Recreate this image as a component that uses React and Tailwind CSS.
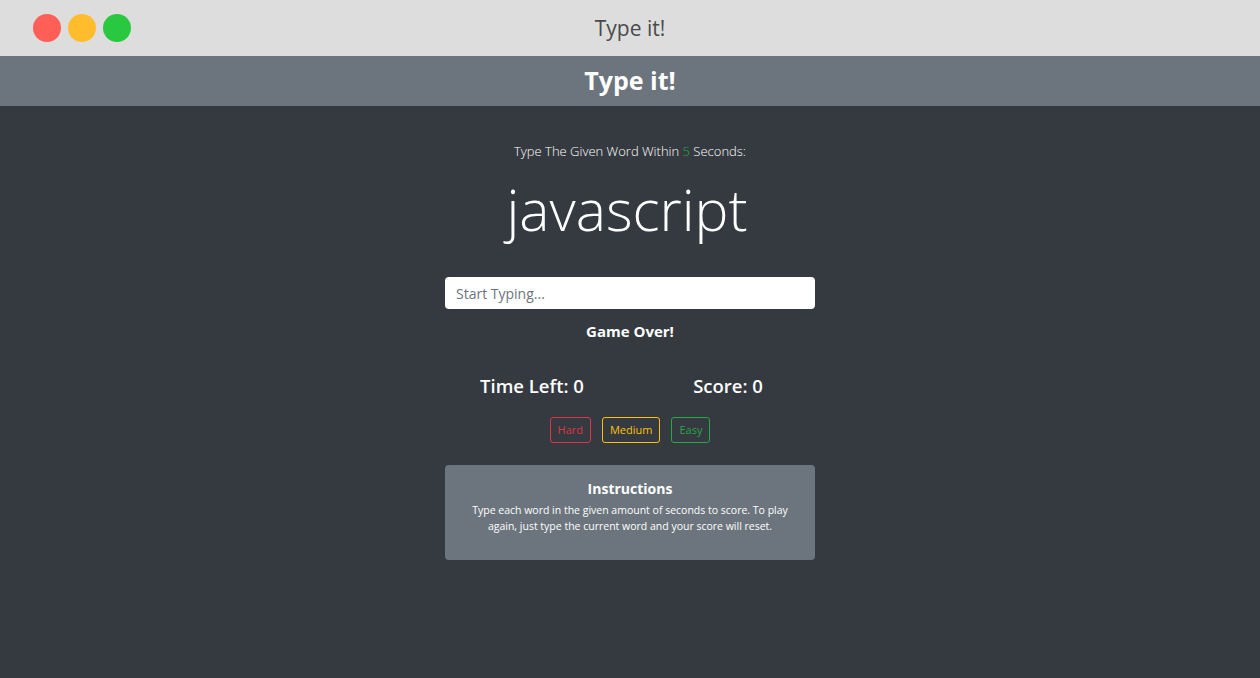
export default function App() {
  const font = { fontFamily: '"Open Sans", "Noto Sans", sans-serif' };
  return (
    <div className="w-[1260px] h-[678px] flex flex-col bg-[#343a40] overflow-hidden" style={font}>
      <div className="h-[56px] bg-[#dddddd] flex items-center relative shrink-0">
        <div className="flex gap-[7px] pl-[33px]">
          <span className="w-[28px] h-[28px] rounded-full bg-[#ff5f57]" />
          <span className="w-[28px] h-[28px] rounded-full bg-[#ffbd2e]" />
          <span className="w-[28px] h-[28px] rounded-full bg-[#28c940]" />
        </div>
        <div className="absolute inset-0 flex items-center justify-center pt-[2px] text-[21px] text-[#4a4a4a]">Type it!</div>
      </div>
      <div className="h-[50px] bg-[#6c757d] flex items-center justify-center shrink-0">
        <h1 className="text-[25px] font-bold text-white">Type it!</h1>
      </div>
      <div className="flex flex-col items-center text-white">
        <p className="mt-[35px] text-[13px] font-light leading-[20px]">
          Type The Given Word Within <span className="text-[#28a745]">5</span> Seconds:
        </p>
        <h2 className="mt-[12px] text-[57px] font-light leading-[72px] -translate-x-[3px]">javascript</h2>
        <input
          className="mt-[32px] w-[370px] h-[32px] rounded-[4px] bg-white px-[11px] text-[14px] text-[#495057] placeholder:text-[#6c757d] outline-none"
          placeholder="Start Typing..."
          readOnly
        />
        <p className="mt-[11px] text-[15px] font-bold leading-[22px]">Game Over!</p>
        <div className="mt-[31px] grid grid-cols-[196px_196px] text-[18.5px] font-semibold leading-[26px]">
          <div className="text-center">Time Left: 0</div>
          <div className="text-center">Score: 0</div>
        </div>
        <div className="mt-[18px] flex gap-[11px] text-[11px] leading-[16px]">
          <button className="h-[26px] px-[7px] border border-[#dc3545] text-[#dc3545] rounded-[3px]">Hard</button>
          <button className="h-[26px] px-[7px] border border-[#ffc107] text-[#ffc107] rounded-[3px]">Medium</button>
          <button className="h-[26px] px-[7px] border border-[#28a745] text-[#28a745] rounded-[3px]">Easy</button>
        </div>
        <div className="mt-[22px] w-[370px] h-[95px] bg-[#6c757d] rounded-[4px] flex flex-col items-center pt-[14px] px-[12px] text-center">
          <h3 className="text-[14px] font-bold leading-[20px]">Instructions</h3>
          <p className="mt-[3px] text-[10.5px] leading-[16px]">
            Type each word in the given amount of seconds to score. To play again, just type the current word and your score will reset.
          </p>
        </div>
      </div>
    </div>
  );
}
